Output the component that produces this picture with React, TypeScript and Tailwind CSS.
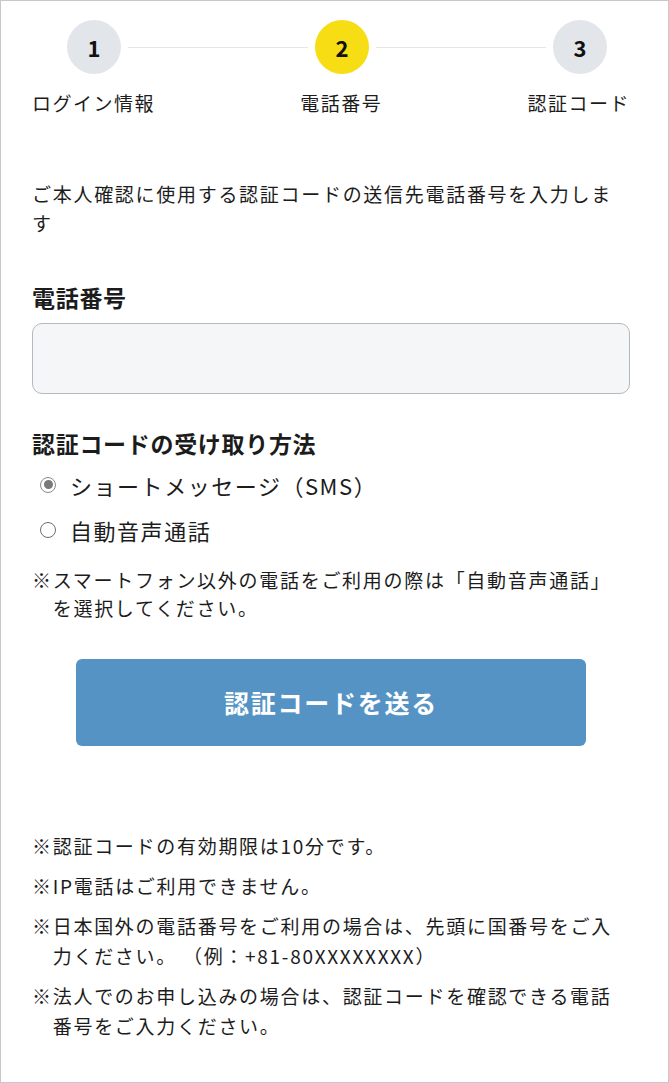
import React from 'react';

const steps = [
  { num: '1', label: 'ログイン情報', active: false },
  { num: '2', label: '電話番号', active: true },
  { num: '3', label: '認証コード', active: false },
];

const notes = [
  '認証コードの有効期限は10分です。',
  'IP電話はご利用できません。',
  '日本国外の電話番号をご利用の場合は、先頭に国番号をご入力ください。 （例：+81-80XXXXXXXX）',
  '法人でのお申し込みの場合は、認証コードを確認できる電話番号をご入力ください。',
];

function StepCircle({ num, active }: { num: string; active: boolean }) {
  return (
    <div
      className={
        'flex h-[54px] w-[54px] shrink-0 items-center justify-center rounded-full text-[22px] font-bold text-[#111] ' +
        (active ? 'bg-[#f6dd14]' : 'bg-[#e2e6ea]')
      }
    >
      {num}
    </div>
  );
}

function Radio({ checked, label }: { checked: boolean; label: string }) {
  return (
    <label className="flex h-[45px] items-center pl-[8px]">
      <span
        className={
          'flex h-[16px] w-[16px] items-center justify-center rounded-full border-[1.5px] ' +
          (checked ? 'border-[#8a8a8a] bg-white' : 'border-[#6f6f6f] bg-white')
        }
      >
        {checked && <span className="h-[9px] w-[9px] rounded-full bg-[#7a7a7a]" />}
      </span>
      <span className="ml-[14px] text-[22px] leading-[30px] tracking-[0.07em]">{label}</span>
    </label>
  );
}

function Note({ text }: { text: string }) {
  return (
    <div className="flex text-[19px] leading-[30px] tracking-[0.09em]">
      <span className="shrink-0">※</span>
      <span>{text}</span>
    </div>
  );
}

export default function App() {
  return (
    <div
      className="h-[1083px] w-[669px] border border-[#c8c8c8] bg-white pl-[31px] pr-[38px] pt-[19px] text-[#1c1c1c]"
      style={{ fontFamily: '"Noto Sans CJK JP", "Noto Sans", sans-serif' }}
    >
      {/* stepper */}
      <div className="flex items-center pl-[35px]">
        <StepCircle num={steps[0].num} active={steps[0].active} />
        <div className="mx-[7px] h-px w-[180px] bg-[#e3e6ea]" />
        <StepCircle num={steps[1].num} active={steps[1].active} />
        <div className="mx-[7px] h-px w-[170px] bg-[#e3e6ea]" />
        <StepCircle num={steps[2].num} active={steps[2].active} />
      </div>
      <div className="mt-[14px] flex justify-between text-[19px] leading-[30px] tracking-[0.08em]">
        {steps.map((s) => (
          <span key={s.num}>{s.label}</span>
        ))}
      </div>

      <p className="mt-[61px] text-[19px] leading-[29px] tracking-[0.09em]">
        ご本人確認に使用する認証コードの送信先電話番号を入力します
      </p>

      <h2 className="mt-[45px] text-[23px] font-bold leading-[30px] tracking-[0.03em]">電話番号</h2>
      <input
        type="tel"
        className="mt-[11px] block h-[71px] w-full rounded-[10px] border border-[#b5b8bd] bg-[#f5f6f8] px-4 text-[20px] outline-none"
      />

      <h2 className="mt-[34px] text-[23px] font-bold leading-[30px] tracking-[0.03em]">
        認証コードの受け取り方法
      </h2>
      <div className="mt-[4px]">
        <Radio checked label="ショートメッセージ（SMS）" />
        <Radio checked={false} label="自動音声通話" />
      </div>
      <div className="mt-[14px] flex text-[19px] leading-[28px] tracking-[0.09em]">
        <span className="shrink-0">※</span>
        <span>スマートフォン以外の電話をご利用の際は「自動音声通話」を選択してください。</span>
      </div>

      <div className="mt-[37px] flex justify-center">
        <button className="h-[87px] w-[510px] rounded-[6px] bg-[#5593c5] text-[25px] font-bold tracking-[0.07em] text-white">
          認証コードを送る
        </button>
      </div>

      <div className="mt-[85px] flex flex-col gap-[10px]">
        {notes.map((n) => (
          <Note key={n} text={n} />
        ))}
      </div>
    </div>
  );
}
